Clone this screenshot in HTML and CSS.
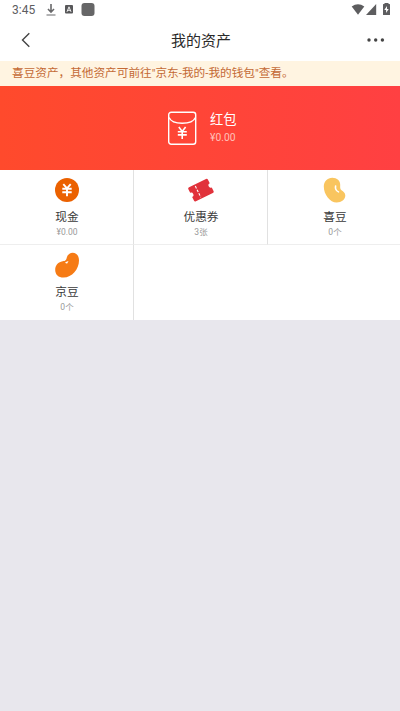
FILE: index.html
```html
<!DOCTYPE html>
<html lang="zh-CN">
<head>
<meta charset="utf-8">
<title>我的资产</title>
<link rel="stylesheet" href="styles.css">
</head>
<body>
<header class="status">
  <span class="time">3:45</span>
  <svg class="notif" width="50" height="14" viewBox="0 0 50 14">
    <path d="M5 1V9M2 6l3 3.2L8 6" fill="none" stroke="#68686a" stroke-width="1.6"/>
    <path d="M.5 12h9" stroke="#8a8a8c" stroke-width="1.3"/>
    <rect x="19" y="2" width="8" height="8.5" rx="1" fill="#58585a"/>
    <path d="M21 8.8L23 3.8l2 5M21.7 7.3h2.6" fill="none" stroke="#fff" stroke-width=".9"/>
    <rect x="35.5" y="0" width="13" height="13" rx="3" fill="#666667"/>
  </svg>
  <svg class="signals" width="40" height="14" viewBox="0 0 40 14">
    <path d="M1.700 3.400Q8 -1 14.300 3.400L8 11.700Z" fill="#5d5d5f"/>
    <path d="M26.200 1V12H16Z" fill="#5d5d5f"/>
    <path d="M33.500 1h1V0h4v1h1q.5 0 .5.500v10q0 .5-.5.500h-6q-.5 0-.5-.500v-10q0-.5.5-.500Z" fill="#5d5d5f"/>
    <path d="M37 3l-2.700 4h1.800v3l2.600-4h-1.700Z" fill="#fff"/>
  </svg>
</header>
<nav class="nav">
  <svg class="back" width="10" height="16" viewBox="0 0 10 16"><path d="M8.300 1.300L1.500 8l6.800 6.700" fill="none" stroke="#444" stroke-width="1.400"/></svg>
  <h1 class="title">我的资产</h1>
  <svg class="more" width="18" height="4" viewBox="0 0 18 4" fill="#444"><circle cx="2" cy="2" r="1.700"/><circle cx="8.700" cy="2" r="1.700"/><circle cx="15.400" cy="2" r="1.700"/></svg>
</nav>
<p class="notice">喜豆资产，其他资产可前往"京东-我的-我的钱包"查看。</p>
<section class="banner">
  <svg width="30" height="35" viewBox="0 0 30 35" fill="none" stroke="#fff" stroke-width="1.400">
    <rect x="1.700" y="1.200" width="27" height="32" rx="2.500"/>
    <path d="M2 6.500C5.500 14.200 25 14.200 28.500 6.500"/>
    <path d="M11.800 16l3.400 4.400L18.600 16M10.800 20.800h9M10.800 23.900h9M15.200 20.400V28" stroke-width="1.600"/>
  </svg>
  <div class="banner-text">
    <div class="banner-name">红包</div>
    <div class="banner-value">¥0.00</div>
  </div>
</section>
<main class="grid">
  <div class="cell">
    <svg class="icon" width="26" height="26" viewBox="0 0 26 26"><circle cx="13" cy="13" r="12" fill="#eb6100"/><path d="M9.300 7.200l3.700 4.100 3.700-4.100M8.300 11.800h9.400M8.300 15.300h9.400M13 11.300v8" fill="none" stroke="#fff" stroke-width="1.900"/></svg>
    <div class="name">现金</div>
    <div class="value">¥0.00</div>
  </div>
  <div class="cell">
    <svg class="icon" width="26" height="26" viewBox="0 0 26 26">
      <g transform="rotate(-26 13 13)">
        <path d="M3.500 5.300H22.300Q23.800 5.300 23.800 6.800v4a2.300 2.300 0 0 0 0 4.600v4Q23.800 20.900 22.300 20.900H3.500Q2 20.900 2 19.400v-4a2.300 2.300 0 0 0 0-4.600v-4Q2 5.300 3.500 5.300Z" fill="#e1323b"/>
        <path d="M9.600 7v12.500" stroke="#fff" stroke-width="1.100" stroke-dasharray="2.600 1.400"/>
      </g>
    </svg>
    <div class="name">优惠券</div>
    <div class="value">3张</div>
  </div>
  <div class="cell">
    <svg class="icon" width="26" height="26" viewBox="0 0 26 26">
      <path d="M1.800 9.500C1.800 4.500 5.500.700 10.300.700c4.700 0 8 3 7.900 7 0 2.600-.3 4.200 1.300 5.500 2 1.500 3.800 2.500 3.800 5.300 0 4-3.800 7-8.600 7C8 25.500 1.800 17.500 1.800 9.500Z" fill="#f9c55f"/>
      <path d="M13.600 9c-.6 3 .6 4.800 2.900 5.900" fill="none" stroke="#fff" stroke-width="1.600" stroke-linecap="round"/>
    </svg>
    <div class="name">喜豆</div>
    <div class="value">0个</div>
  </div>
  <div class="cell">
    <svg class="icon" width="26" height="26" viewBox="0 0 26 26">
      <path d="M18.700.700C22.800.700 25 4 25 8.500 25 17 18 25.600 9.500 25.600 4.500 25.600 1.200 22.500 1.200 18c0-4.500 2.900-7.800 6.500-8.500 3-.6 4.200-.4 4.900-3.200C13.400 3 15.300.700 18.700.700Z" fill="#f67b15"/>
      <path d="M11.200 10.300l3.300-1.300-1.300 2.500q-1.500.300-2-1.200" fill="#fff"/>
    </svg>
    <div class="name">京豆</div>
    <div class="value">0个</div>
  </div>
  <div class="cell blank"></div>
</main>
</body>
</html>
```
FILE: styles.css
```css
* { box-sizing: border-box; }
body {
  margin: 0;
  min-height: 711px;
  background: #e8e7ed;
  color: #3a3a3a;
  font-family: Roboto, "Noto Sans CJK SC", sans-serif;
}
.status {
  display: flex;
  align-items: center;
  height: 20px;
  padding: 0 10px 0 12px;
  background: #fff;
}
.time { width: 34px; font-size: 12px; line-height: 20px; color: #5d5d5f; }
.notif { margin-top: -1px; }
.signals { margin-left: auto; }
.nav {
  display: grid;
  grid-template-columns: 40px 1fr 40px;
  align-items: center;
  height: 41px;
  background: #fff;
}
.back { margin-left: 21px; margin-top: -1px; }
.more { margin-left: 7px; margin-top: -1px; }
.title {
  margin: 0;
  padding-left: 2px;
  text-align: center;
  font-size: 15px;
  line-height: 20px;
  font-weight: 400;
  color: #2a2a2a;
}
.notice {
  margin: 0;
  height: 25px;
  padding-left: 12px;
  background: #fff4e1;
  color: #c46a35;
  font-size: 11.65px;
  line-height: 25px;
  white-space: nowrap;
}
.banner {
  display: flex;
  align-items: center;
  height: 84px;
  padding-left: 167px;
  gap: 13px;
  background: linear-gradient(90deg, #ff4a2c, #ff4042);
  color: #fff;
}
.banner-text { padding-top: 2px; }
.banner-name { font-size: 13.3px; line-height: 18px; }
.banner-value { font-size: 10.3px; line-height: 18px; color: #ffc1ba; }
.grid {
  display: grid;
  grid-template-columns: 134px 134px 132px;
  grid-template-rows: 75px 75px;
  background: #fff;
}
.cell {
  display: flex;
  flex-direction: column;
  align-items: center;
  padding: 7px 0 0 1px;
  border-right: 1px solid #e1e1e1;
  border-bottom: 1px solid #eee;
}
.cell:nth-child(3) { border-right: 0; padding-left: 2px; }
.cell:nth-child(n + 4) { border-bottom: 0; }
.blank { grid-column: span 2; border-right: 0; }
.icon { display: block; }
.name { margin-top: 6px; font-size: 11.7px; line-height: 16px; }
.value { font-size: 8.5px; line-height: 14px; color: #999; }
```
